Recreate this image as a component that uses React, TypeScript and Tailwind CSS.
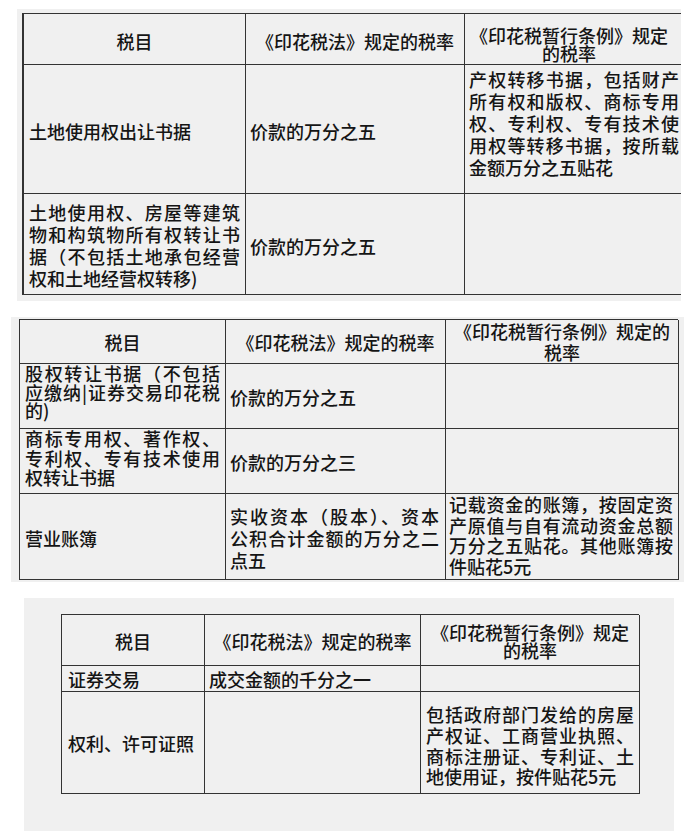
import React from "react";

type CellProps = {
  children?: React.ReactNode;
  className?: string;
};

function Cell({ children, className = "" }: CellProps) {
  return (
    <div className={"flex flex-col border-r border-b border-[#333] " + className}>
      {children}
    </div>
  );
}

function J({ children }: { children: React.ReactNode }) {
  return <div className="whitespace-nowrap text-justify [text-align-last:justify]">{children}</div>;
}

function L({ children }: { children: React.ReactNode }) {
  return <div className="whitespace-nowrap">{children}</div>;
}

export default function App() {
  return (
    <div className="w-[699px] h-[840px] bg-white pt-[9px] text-[18px] font-medium text-[#151515] font-['Noto_Sans_CJK_SC','Noto_Sans',sans-serif]">
      {/* Panel 1 */}
      <div className="ml-[17px] w-[664px] h-[292px] bg-[#f0f0f0] overflow-hidden pl-[5px] pt-[4px]">
        <div className="grid w-[662px] grid-cols-[222px_219px_221px] grid-rows-[51px_129px_101px] border-t border-l-2 border-[#333] leading-[22px]">
          <Cell className="justify-center items-center pt-[3px]">税目</Cell>
          <Cell className="justify-center items-center pt-[4px]">《印花税法》规定的税率</Cell>
          <Cell className="justify-start items-start pl-[3px] pt-[12px] leading-[18px]">
            <div className="w-[202px] text-center">
              <L>《印花税暂行条例》规定</L>
              <L>的税率</L>
            </div>
          </Cell>

          <Cell className="justify-center pl-[5px] pt-[4px]">土地使用权出让书据</Cell>
          <Cell className="justify-center pl-[4px] pt-[4px]">价款的万分之五</Cell>
          <Cell className="justify-start pl-[4px] pt-[3px]">
            <div className="w-[210px]">
              <J>产权转移书据，包括财产</J>
              <J>所有权和版权、商标专用</J>
              <J>权、专利权、专有技术使</J>
              <J>用权等转移书据，按所载</J>
              <L>金额万分之五贴花</L>
            </div>
          </Cell>

          <Cell className="justify-center pl-[5px] pr-[5px] pt-[2px]">
            <J>土地使用权、房屋等建筑</J>
            <J>物和构筑物所有权转让书</J>
            <J>据（不包括土地承包经营</J>
            <L>权和土地经营权转移)</L>
          </Cell>
          <Cell className="justify-center pl-[4px] pt-[4px]">价款的万分之五</Cell>
          <Cell />
        </div>
      </div>

      {/* Panel 2 */}
      <div className="mt-[16px] ml-[11px] w-[673px] h-[265px] bg-[#f0f0f0] overflow-hidden pl-[8px] pt-[2px]">
        <div className="grid w-[659px] grid-cols-[206px_220px_233px] grid-rows-[44px_65px_65px_86px] border-t border-l border-[#333]">
          <Cell className="justify-center items-center pt-[2px]">税目</Cell>
          <Cell className="justify-center items-center pt-[2px]">《印花税法》规定的税率</Cell>
          <Cell className="justify-center items-center leading-[21px]">
            <L>《印花税暂行条例》规定的</L>
            <L>税率</L>
          </Cell>

          <Cell className="justify-start pl-[5px] pr-[5px] pt-[0px] leading-[18.5px]">
            <J>股权转让书据（不包括</J>
            <J>应缴纳|证券交易印花税</J>
            <L>的)</L>
          </Cell>
          <Cell className="justify-center pl-[4px] pt-[2px]">价款的万分之五</Cell>
          <Cell />

          <Cell className="justify-start pl-[5px] pr-[5px] pt-[0px] leading-[19.5px]">
            <J>商标专用权、著作权、</J>
            <J>专利权、专有技术使用</J>
            <L>权转让书据</L>
          </Cell>
          <Cell className="justify-center pl-[4px] pt-[2px]">价款的万分之三</Cell>
          <Cell />

          <Cell className="justify-center pl-[5px] pt-[4px]">营业账簿</Cell>
          <Cell className="justify-center pl-[4px] pr-[6px] pt-[2px] leading-[22px]">
            <J>实收资本（股本）、资本</J>
            <J>公积合计金额的万分之二</J>
            <L>点五</L>
          </Cell>
          <Cell className="justify-start pl-[3px] pr-[5px] pt-[0px] leading-[20.5px]">
            <J>记载资金的账簿，按固定资</J>
            <J>产原值与自有流动资金总额</J>
            <J>万分之五贴花。其他账簿按</J>
            <L>件贴花5元</L>
          </Cell>
        </div>
      </div>

      {/* Panel 3 */}
      <div className="mt-[16px] ml-[24px] w-[650px] h-[233px] bg-[#f0f0f0] overflow-hidden pl-[37px] pt-[16px]">
        <div className="grid w-[578px] grid-cols-[143px_216px_219px] grid-rows-[51px_26px_102px] border-t border-l border-[#333]">
          <Cell className="justify-center items-center pt-[3px]">税目</Cell>
          <Cell className="justify-center items-center pt-[3px]">《印花税法》规定的税率</Cell>
          <Cell className="justify-center items-center leading-[18px] pt-[2px]">
            <L>《印花税暂行条例》规定</L>
            <L>的税率</L>
          </Cell>

          <Cell className="justify-center pl-[6px] leading-[22px]">证券交易</Cell>
          <Cell className="justify-center pl-[4px] leading-[22px]">成交金额的千分之一</Cell>
          <Cell />

          <Cell className="justify-center pl-[6px] pt-[2px]">权利、许可证照</Cell>
          <Cell />
          <Cell className="justify-center pl-[5px] pr-[5px] pt-[6px] leading-[20.7px]">
            <J>包括政府部门发给的房屋</J>
            <J>产权证、工商营业执照、</J>
            <J>商标注册证、专利证、土</J>
            <L>地使用证，按件贴花5元</L>
          </Cell>
        </div>
      </div>
    </div>
  );
}
